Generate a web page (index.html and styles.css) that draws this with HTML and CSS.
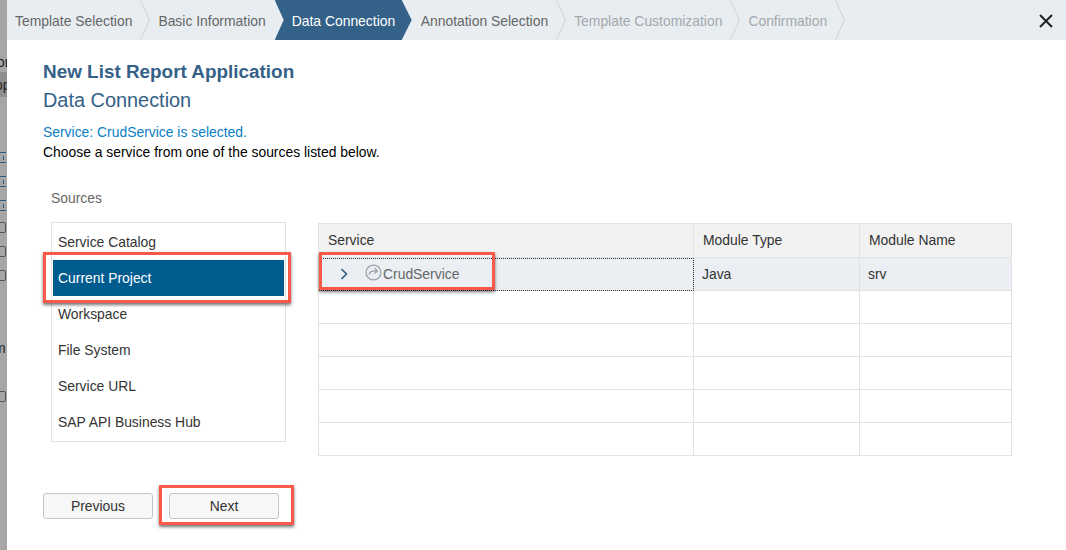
FILE: index.html
```html
<!DOCTYPE html>
<html>
    <head>
        <title>New List Report Application</title>
        <meta name="viewport" content="width=device-width, initial-scale=1" />
        <meta charset="utf-8" />
        <link rel="stylesheet" href="styles.css">
    </head>
    <body>
        <div class="backdrop">
            <div class="backBand"><span class="backOr">or</span><span class="backOp">op</span></div>
            <div class="backIcons">
                <span class="backIcon plus"></span>
                <span class="backIcon plus"></span>
                <span class="backIcon plus"></span>
                <span class="backIcon doc firstDoc"></span>
                <span class="backIcon doc"></span>
                <span class="backIcon doc"></span>
            </div>
            <span class="backM">m</span>
            <span class="backIcon doc lastDoc"></span>
        </div>

        <div class="dialog">
            <nav class="wizard">
                <div class="step">Template Selection</div>
                <svg class="chevron" viewBox="0 0 10 40"><path d="M0.5 0 L9.5 20 L0.5 40" /></svg>
                <div class="step basic">Basic Information</div>
                <div class="step active">Data Connection</div>
                <div class="step">Annotation Selection</div>
                <svg class="chevron" viewBox="0 0 10 40"><path d="M0.5 0 L9.5 20 L0.5 40" /></svg>
                <div class="step disabled">Template Customization</div>
                <svg class="chevron" viewBox="0 0 10 40"><path d="M0.5 0 L9.5 20 L0.5 40" /></svg>
                <div class="step disabled">Confirmation</div>
                <svg class="chevron" viewBox="0 0 10 40"><path d="M0.5 0 L9.5 20 L0.5 40" /></svg>
                <svg class="close" viewBox="0 0 14 14"><path d="M1 1 L13 13 M13 1 L1 13" /></svg>
            </nav>

            <div class="content">
                <h1>New List Report Application</h1>
                <h2>Data Connection</h2>
                <p class="status">Service: CrudService is selected.</p>
                <p class="hint">Choose a service from one of the sources listed below.</p>

                <div class="columns">
                    <div class="sources">
                        <div class="sourcesLabel">Sources</div>
                        <ul class="sourceList">
                            <li>Service Catalog</li>
                            <li class="selected">Current Project
                                <span class="callout calloutSource"></span>
                            </li>
                            <li>Workspace</li>
                            <li>File System</li>
                            <li>Service URL</li>
                            <li>SAP API Business Hub</li>
                        </ul>
                    </div>

                    <div class="serviceTable">
                        <div class="row head">
                            <div class="cell">Service</div>
                            <div class="cell">Module Type</div>
                            <div class="cell">Module Name</div>
                        </div>
                        <div class="row current">
                            <div class="cell serviceCell">
                                <svg class="expand" viewBox="0 0 8 12"><path d="M1.5 1 L6.5 6 L1.5 11" /></svg>
                                <svg class="serviceIcon" viewBox="0 0 16 16">
                                    <circle cx="8" cy="8" r="7" />
                                    <path d="M4 10 C4 7 6 6.5 11.5 6.5 M9 4 L11.8 6.5 L9 9" />
                                </svg>
                                <span>CrudService</span>
                                <span class="callout calloutService"></span>
                            </div>
                            <div class="cell">Java</div>
                            <div class="cell">srv</div>
                        </div>
                        <div class="row"><div class="cell"></div><div class="cell"></div><div class="cell"></div></div>
                        <div class="row"><div class="cell"></div><div class="cell"></div><div class="cell"></div></div>
                        <div class="row"><div class="cell"></div><div class="cell"></div><div class="cell"></div></div>
                        <div class="row"><div class="cell"></div><div class="cell"></div><div class="cell"></div></div>
                        <div class="row"><div class="cell"></div><div class="cell"></div><div class="cell"></div></div>
                    </div>
                </div>

                <div class="buttons">
                    <button class="button">Previous</button>
                    <button class="button">Next
                        <span class="callout calloutNext"></span>
                    </button>
                </div>
            </div>
        </div>
    </body>
</html>
```

FILE: styles.css
```css
html {
    font-family: "Liberation Sans", Arial, sans-serif;
    font-size: 13.9px;
}
body {
    margin: 0;
    height: 550px;
    display: flex;
    overflow: hidden;
    background: #ffffff;
}

/* page behind the dialog */
.backdrop {
    position: relative;
    width: 7px;
    height: 550px;
    background: #a6a6a6;
    overflow: hidden;
    flex: none;
    color: #222222;
}
.backBand {
    margin-top: 72px;
    height: 25px;
    background: #8e8e8e;
}
.backOr {
    position: absolute;
    top: 54px;
    left: -3px;
}
.backOp {
    position: absolute;
    top: 77px;
    left: -5px;
}
.backIcons {
    display: flex;
    flex-direction: column;
    gap: 13px;
    margin-top: 55px;
}
.backIcon {
    display: block;
    position: relative;
    width: 8px;
    height: 11px;
    margin-left: -2px;
    border: 1px solid #555555;
    border-radius: 2px;
    box-sizing: border-box;
}
.backIcon.plus {
    border-width: 1px 0;
    border-color: #2f5a80;
    border-radius: 0;
}
.backIcon.plus::after {
    content: "";
    position: absolute;
    left: 5px;
    top: 3px;
    width: 1px;
    height: 4px;
    background: #2f5a80;
}
.firstDoc {
    margin-top: -2px;
}
.backM {
    position: absolute;
    top: 340px;
    left: -6px;
}
.backIcon.lastDoc {
    position: absolute;
    top: 391px;
    left: 0;
}

/* dialog */
.dialog {
    flex: 1;
    min-width: 0;
}
.wizard {
    display: flex;
    align-items: center;
    height: 40px;
    background: #e8edf1;
    padding-left: 8px;
    color: #666666;
}
.step {
    height: 40px;
    line-height: 42px;
    padding: 0 8px 0 9px;
    white-space: nowrap;
}
.step:first-child {
    padding-left: 0;
    margin-left: 0;
}
.step.basic {
    padding: 0 9px 0 8px;
}
.step.active {
    width: 137px;
    box-sizing: border-box;
    padding: 0 0 0 17px;
    background: #346187;
    color: #ffffff;
    clip-path: polygon(0 0, 127px 0, 100% 50%, 127px 100%, 0 100%, 9px 50%);
}
.step.disabled {
    padding-left: 8px;
    color: #a3a8ad;
}
.chevron {
    width: 10px;
    height: 40px;
    flex: none;
}
.chevron path {
    fill: none;
    stroke: #cdd3d8;
    stroke-width: 1;
}
.close {
    width: 14px;
    height: 14px;
    margin-left: auto;
    margin-right: 13px;
    margin-top: 2px;
}
.close path {
    stroke: #222222;
    stroke-width: 2;
    fill: none;
}

.content {
    padding: 20px 54px 0 36px;
}
h1 {
    margin: 0;
    font-size: 18.9px;
    line-height: 23px;
    font-weight: bold;
    color: #346187;
}
h2 {
    margin: 5px 0 0 0;
    font-size: 19.9px;
    line-height: 24px;
    font-weight: normal;
    color: #346187;
}
p {
    margin: 0;
    line-height: 20px;
}
.status {
    margin-top: 10px;
    color: #0a7ec5;
}
.hint {
    color: #000000;
}

.columns {
    display: flex;
    align-items: flex-start;
    margin-left: 8px;
    margin-top: 26px;
}
.sources {
    width: 235px;
    margin-right: 32px;
}
.sourcesLabel {
    line-height: 20px;
    color: #666666;
    margin-bottom: 14px;
}
.sourceList {
    list-style: none;
    margin: 0;
    padding: 1px;
    border: 1px solid #e2e2e2;
}
.sourceList li {
    position: relative;
    height: 36px;
    line-height: 36px;
    padding-left: 5px;
    color: #333333;
}
.sourceList .selected {
    background: #005c8f;
    color: #ffffff;
}

.serviceTable {
    width: 694px;
    margin-top: 35px;
    border-top: 1px solid #e2e2e2;
    border-left: 1px solid #e2e2e2;
    box-sizing: border-box;
}
.row {
    display: grid;
    grid-template-columns: 375px 166px 152px;
    height: 33px;
}
.cell {
    position: relative;
    display: flex;
    align-items: center;
    padding-left: 8px;
    border-right: 1px solid #e2e2e2;
    border-bottom: 1px solid #e2e2e2;
    color: #333333;
    box-sizing: border-box;
}
.head {
    height: 34px;
    background: #f2f2f2;
}
.head .cell {
    padding-left: 9px;
    padding-bottom: 2px;
}
.current {
    background: #ebeff4;
}
.serviceCell {
    outline: 1px dotted #333333;
    outline-offset: -1px;
    padding-left: 21px;
    color: #666666;
}
.expand {
    width: 8px;
    height: 12px;
    flex: none;
    margin-right: 17px;
}
.expand path {
    fill: none;
    stroke: #2f5a80;
    stroke-width: 1.6;
}
.serviceIcon {
    width: 17px;
    height: 17px;
    flex: none;
    margin-top: -3px;
    margin-right: 1px;
}
.serviceIcon circle, .serviceIcon path {
    fill: none;
    stroke: #9aa3a8;
    stroke-width: 1.2;
}

.buttons {
    display: flex;
    gap: 16px;
    margin-top: 37px;
}
.button {
    position: relative;
    width: 110px;
    height: 26px;
    padding: 0;
    border: 1px solid #c4c4c4;
    border-radius: 3px;
    background: #f7f7f7;
    font-family: inherit;
    font-size: 13.9px;
    color: #333333;
}

/* red boxes added over the screenshot */
.callout {
    position: absolute;
    border: 3px solid #f9594b;
    box-shadow: 0 2px 3px rgba(0, 0, 0, 0.55);
    box-sizing: border-box;
}
.calloutSource {
    left: -10px;
    top: -8px;
    width: 248px;
    height: 51px;
}
.calloutService {
    left: 0;
    top: -6px;
    width: 176px;
    height: 38px;
}
.calloutNext {
    left: -11px;
    top: -9px;
    width: 135px;
    height: 40px;
}
```
